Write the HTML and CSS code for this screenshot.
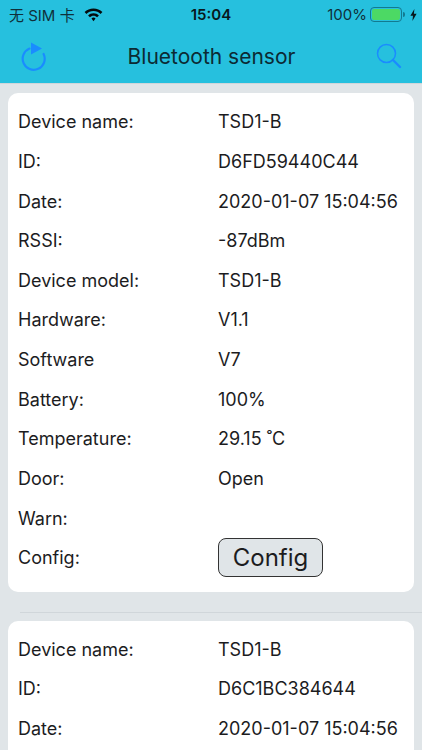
FILE: index.html
```html
<!DOCTYPE html>
<html lang="en">
<head>
<meta charset="UTF-8">
<title>Bluetooth sensor</title>
<meta name="viewport" content="width=device-width, initial-scale=1">
<link rel="stylesheet" href="styles.css">
</head>
<body>
<header class="top">
  <div class="status">
    <div class="status-left">
      <span>无 SIM 卡</span>
      <svg class="wifi" width="19" height="14" viewBox="0 0 19 14"><path d="M9.5 0.6C6 0.6 2.9 1.9 0.6 4.1L2.4 6C4.2 4.2 6.7 3.1 9.5 3.1S14.8 4.2 16.6 6L18.4 4.1C16.1 1.9 13 0.6 9.5 0.6Z"/><path d="M9.5 5.2C7.4 5.2 5.5 6 4.1 7.4L5.9 9.2C6.8 8.3 8.1 7.7 9.5 7.7S12.2 8.3 13.1 9.2L14.9 7.4C13.5 6 11.6 5.2 9.5 5.2Z"/><path d="M9.5 9.6C8.7 9.6 8 9.9 7.5 10.5L9.5 13.2L11.5 10.5C11 9.9 10.3 9.6 9.5 9.6Z"/></svg>
    </div>
    <div class="status-time">15:04</div>
    <div class="status-right">
      <span>100%</span>
      <span class="battery"><span class="battery-fill"></span></span>
      <span class="battery-tip"></span>
      <svg class="bolt" width="7" height="12" viewBox="0 0 7 12"><path d="M4.4 0L0.4 6.8H3L2.4 12L6.6 4.8H3.9Z"/></svg>
    </div>
  </div>
  <div class="navbar">
    <svg class="nav-icon" width="28" height="30" viewBox="0 0 28 30" fill="none"><path d="M10.5 7.6A11 11 0 1 0 24.6 13" stroke="#1a8cff" stroke-width="2.2" stroke-linecap="round"/><path d="M12 1.5L23 7.6L12 13.5Z" fill="#1a8cff"/></svg>
    <h1>Bluetooth sensor</h1>
    <svg class="nav-icon" width="26" height="26" viewBox="0 0 26 26" fill="none"><circle cx="10.5" cy="10.5" r="9" stroke="#1a8cff" stroke-width="1.5"/><path d="M17 17L24 24" stroke="#1a8cff" stroke-width="2.4" stroke-linecap="round"/></svg>
  </div>
</header>

<main class="list">
  <section class="card">
    <div class="row"><span class="label">Device name:</span><span>TSD1-B</span></div>
    <div class="row"><span class="label">ID:</span><span>D6FD59440C44</span></div>
    <div class="row"><span class="label">Date:</span><span>2020-01-07 15:04:56</span></div>
    <div class="row"><span class="label">RSSI:</span><span>-87dBm</span></div>
    <div class="row"><span class="label">Device model:</span><span>TSD1-B</span></div>
    <div class="row"><span class="label">Hardware:</span><span>V1.1</span></div>
    <div class="row"><span class="label">Software</span><span>V7</span></div>
    <div class="row"><span class="label">Battery:</span><span>100%</span></div>
    <div class="row"><span class="label">Temperature:</span><span>29.15 ˚C</span></div>
    <div class="row"><span class="label">Door:</span><span>Open</span></div>
    <div class="row"><span class="label">Warn:</span><span></span></div>
    <div class="row"><span class="label">Config:</span><button class="config-btn">Config</button></div>
  </section>
  <hr class="sep">
  <section class="card">
    <div class="row"><span class="label">Device name:</span><span>TSD1-B</span></div>
    <div class="row"><span class="label">ID:</span><span>D6C1BC384644</span></div>
    <div class="row"><span class="label">Date:</span><span>2020-01-07 15:04:56</span></div>
  </section>
</main>
</body>
</html>
```

FILE: styles.css
```css
*{box-sizing:border-box;margin:0;padding:0;}
html,body{height:100%;overflow:hidden;}
body{background:#e0e5e8;color:#1c1c1e;font-family:Inter,"Noto Sans CJK SC",sans-serif;}
.top{background:#26c0de;height:84px;border-bottom:1px solid #d0d6da;}
.status{height:29px;display:flex;align-items:center;justify-content:space-between;position:relative;padding:0 5px 0 9px;font-size:15px;color:#10303a;}
.status-left{display:flex;align-items:center;gap:9px;}
.wifi{fill:#050a0c;}
.status-time{position:absolute;left:0;right:0;text-align:center;font-weight:600;color:#08181d;}
.status-right{display:flex;align-items:center;}
.battery{width:32px;height:15px;border:1px solid #137a90;border-radius:4px;padding:1px;margin-left:3px;display:flex;}
.battery-fill{flex:1;background:#4cd964;border-radius:2px;}
.battery-tip{width:2px;height:5px;background:#137a90;border-radius:0 2px 2px 0;margin-left:1px;}
.bolt{fill:#08181d;margin-left:5px;}
.navbar{height:54px;display:flex;align-items:center;justify-content:space-between;padding:0 20px 0 19px;}
.navbar h1{font-size:21px;font-weight:400;color:#0c2a33;}
.list{padding:9px 8px 0;}
.card{background:#fff;border-radius:10px;padding:9px 10px 14px;}
.row{height:39.64px;display:flex;align-items:center;font-size:18px;}
.label{width:200px;flex:none;}
.config-btn{width:105px;height:39px;background:#e0e5e8;border:1px solid #333;border-radius:8px;font:inherit;font-size:24px;color:inherit;}
.sep{border:none;border-top:1px solid #d0d6da;margin:20px -8px 8px 12px;}
```
